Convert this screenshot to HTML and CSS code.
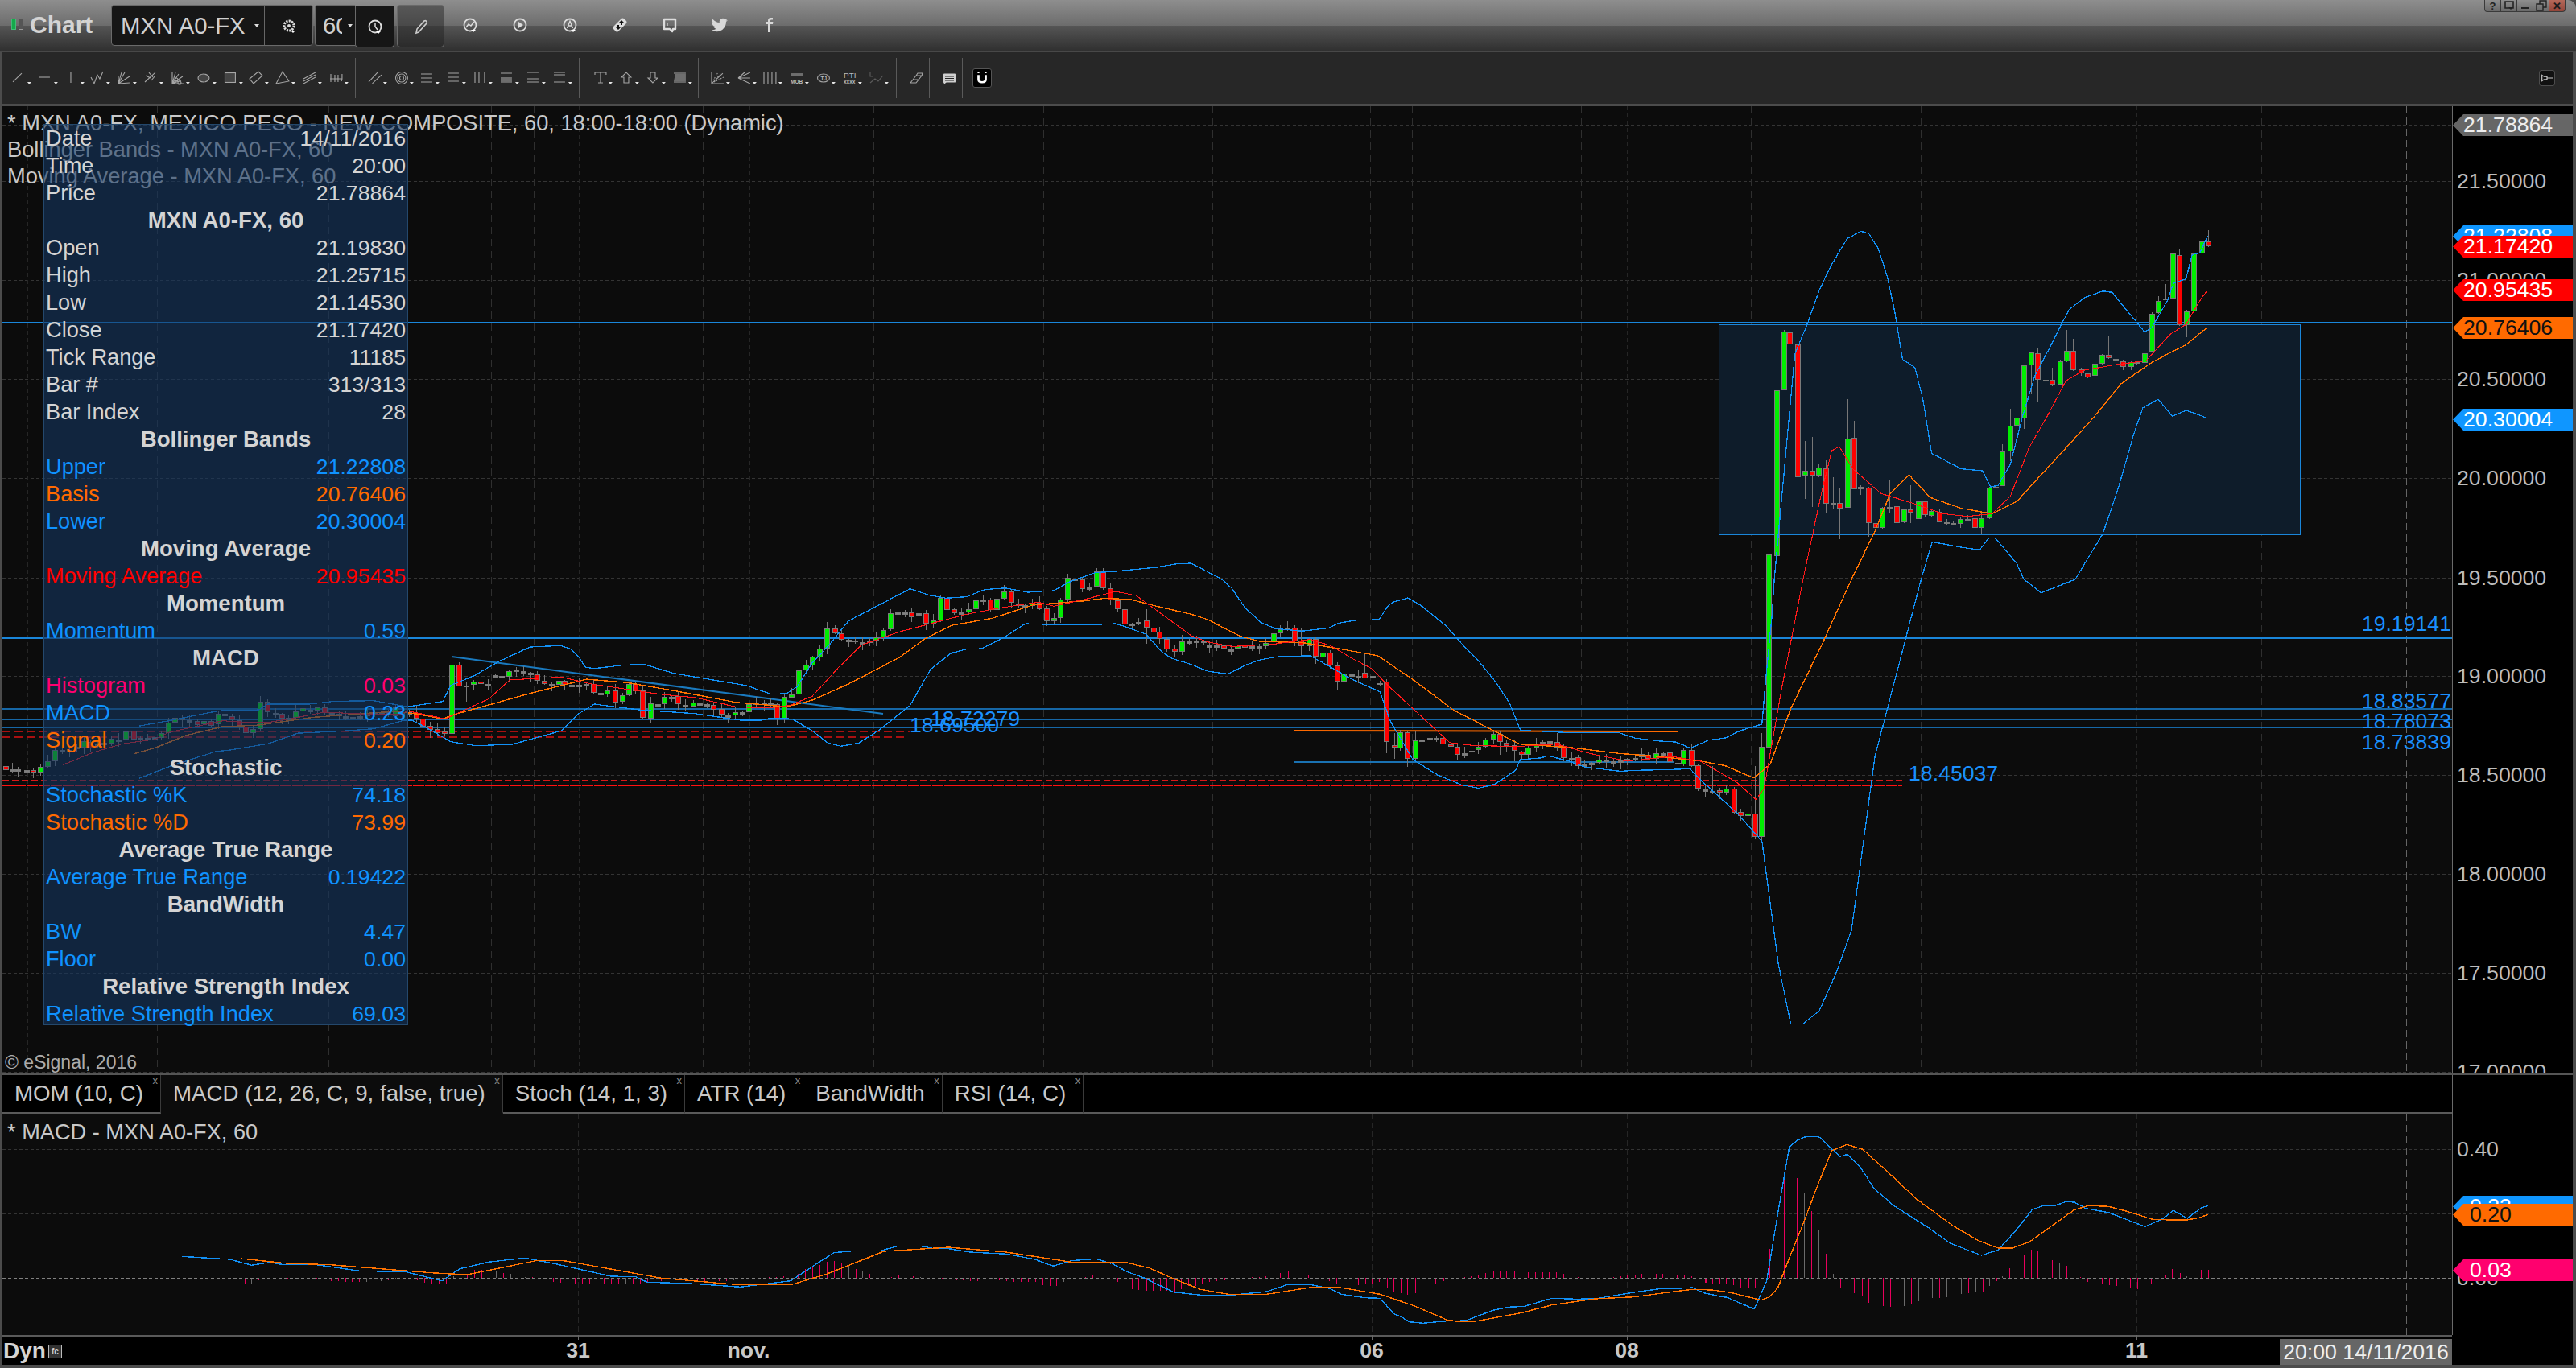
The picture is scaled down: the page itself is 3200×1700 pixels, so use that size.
FILE: index.html
```html
<!DOCTYPE html>
<html lang="en">
<head>
<meta charset="utf-8">
<title>Chart</title>
<link rel="stylesheet" href="styles.css">
</head>
<body>
<div class="window">
  <header class="titlebar">
    <span class="logo"><i class="logo-on"></i><i class="logo-off"></i></span>
    <span class="app-name">Chart</span>
    <div class="box symbol-box">
      <span class="symbol">MXN A0-FX</span>
      <i class="mini-caret"></i>
      <span class="gear-cell">
        <svg class="ticon" viewBox="0 0 20 20"><circle cx="10" cy="10" r="6" fill="none" stroke="#ddd" stroke-width="3" stroke-dasharray="2.2 1.2"/><circle cx="10" cy="10" r="2" fill="#ddd"/><path d="M12 16h6l-3 3z" fill="#fff"/></svg>
      </span>
    </div>
    <div class="box interval-box">
      <span class="interval">60</span>
      <i class="mini-caret"></i>
    </div>
    <div class="box clock-box">
      <svg class="ticon" viewBox="0 0 20 20"><circle cx="10" cy="10" r="7.5" fill="none" stroke="#ddd" stroke-width="1.8"/><path d="M10 5v5l3 4" fill="none" stroke="#ddd" stroke-width="1.5"/><path d="M11 16h6l-3 3z" fill="#fff"/></svg>
    </div>
    <div class="box pencil-box">
      <svg class="ticon" viewBox="0 0 20 20"><path d="M4 18l1-5L14 3q2-1 3 1t-1 3L7 17z" fill="none" stroke="#ccc" stroke-width="1.6"/></svg>
    </div>
    <div class="title-icons">
      <svg class="ticon" viewBox="0 0 20 20"><circle cx="10" cy="10" r="7.5" fill="none" stroke="#ddd" stroke-width="1.8"/><path d="M5 13l3-4 3 2 4-5" fill="none" stroke="#ddd" stroke-width="1.5"/><path d="M11 16h6l-3 3z" fill="#fff"/></svg>
      <svg class="ticon" viewBox="0 0 20 20"><circle cx="10" cy="10" r="7.5" fill="none" stroke="#ddd" stroke-width="1.8"/><path d="M8 6l6 4-6 4z" fill="#ddd"/></svg>
      <svg class="ticon" viewBox="0 0 20 20"><circle cx="10" cy="10" r="7.5" fill="none" stroke="#ddd" stroke-width="1.8"/><path d="M6.5 14L10 5l3.5 9M8 11h4" fill="none" stroke="#ddd" stroke-width="1.3"/><path d="M11 16h6l-3 3z" fill="#fff"/></svg>
      <svg class="ticon" viewBox="0 0 20 20"><path d="M2 12L12 2q1.500-1 3 0l3 3q1 1.500 0 3L8 18q-1.500 1-3 0l-3-3q-1-1.500 0-3z" fill="#ddd"/><path d="M12 4l3 3h-2v3h-2V7H9zM8 16l-3-3h2v-3h2v3h2z" fill="#111"/></svg>
      <svg class="ticon" viewBox="0 0 20 20"><path d="M3 3h14v12h-3l-1 3-3-3H3z" fill="none" stroke="#ddd" stroke-width="2.4" stroke-linejoin="round"/><path d="M7 7v4" stroke="#ddd" stroke-width="1.2"/></svg>
      <svg class="ticon" viewBox="0 0 24 24"><path d="M23.950 4.570a10 10 0 0 1-2.820.770 4.960 4.960 0 0 0 2.160-2.720 9.900 9.900 0 0 1-3.120 1.190 4.920 4.920 0 0 0-8.380 4.480A13.980 13.980 0 0 1 1.670 3.150a4.920 4.920 0 0 0 1.520 6.570 4.900 4.900 0 0 1-2.230-.610v.060a4.920 4.920 0 0 0 3.950 4.830 4.900 4.900 0 0 1-2.220.080 4.930 4.930 0 0 0 4.600 3.420A9.870 9.870 0 0 1 0 19.540a13.940 13.940 0 0 0 7.550 2.210c9.050 0 14-7.500 14-14 0-.210 0-.420-.010-.630a10 10 0 0 0 2.410-2.550z" fill="#d8d8d8"/></svg>
      <svg class="ticon" viewBox="0 0 20 20"><path d="M11 6V4.500q0-1 1.200-1H14V1h-2.500Q8 1 8 4.500V6H6v3h2v10h3V9h3l.4-3z" fill="#d8d8d8"/></svg>
    </div>
    <div class="win-btns">
      <span class="win-btn">?</span>
      <span class="win-btn"><svg class="wicon" viewBox="0 0 14 14"><path d="M2 2h10v8H2z" fill="none" stroke="#222" stroke-width="1.6"/><path d="M6 9h6l-3 3z" fill="#222"/></svg></span>
      <span class="win-btn"><svg class="wicon" viewBox="0 0 14 14"><path d="M2 10h10" stroke="#222" stroke-width="2"/></svg></span>
      <span class="win-btn"><svg class="wicon" viewBox="0 0 14 14"><path d="M1 5h8v8H1zM5 5V1h8v8H9" fill="none" stroke="#222" stroke-width="1.4"/></svg></span>
      <span class="win-btn win-close">✕</span>
    </div>
  </header>

  <nav class="toolbar">
    <svg class="tool" viewBox="0 0 33 32"><path d="M0 21L11 10"/><path class="caret" d="M18 21h5l-2.500 3z"/></svg>
    <svg class="tool" viewBox="0 0 33 32"><path d="M0 15h13"/><path class="caret" d="M18 21h5l-2.500 3z"/></svg>
    <svg class="tool" viewBox="0 0 33 32"><path d="M6 9v13"/><path class="caret" d="M18 21h5l-2.500 3z"/></svg>
    <svg class="tool" viewBox="0 0 33 32"><path d="M-1 15l4 8 4-11 3 5 4-9"/><path class="caret" d="M18 21h5l-2.500 3z"/></svg>
    <svg class="tool" viewBox="0 0 33 32"><path d="M0 14v9L4 9M0 23L14 14M0 23l14-1M0 23L8 9"/><path class="caret" d="M18 21h5l-2.500 3z"/></svg>
    <svg class="tool" viewBox="0 0 33 32"><path d="M0 21L13 9M1 13l6 3M5 9l5 6M8 19l5-6"/><path class="caret" d="M18 21h5l-2.500 3z"/></svg>
    <svg class="tool" viewBox="0 0 33 32"><path d="M1 9v14h14M1 23L14 14M1 23L12 19M1 23L5 9M1 23L9 11"/><circle cx="6" cy="18" r="2"/><circle cx="10" cy="22" r="2"/><path class="caret" d="M18 21h5l-2.500 3z"/></svg>
    <svg class="tool" viewBox="0 0 33 32"><ellipse class="shade" cx="7" cy="16" rx="7" ry="5"/><path class="caret" d="M18 21h5l-2.500 3z"/></svg>
    <svg class="tool" viewBox="0 0 33 32"><rect class="shade" x=".5" y="9.500" width="13" height="12"/><path class="caret" d="M18 21h5l-2.500 3z"/></svg>
    <svg class="tool" viewBox="0 0 33 32"><path d="M-1 17L10 8l5 5L4 23z"/><path class="caret" d="M18 21h5l-2.500 3z"/></svg>
    <svg class="tool" viewBox="0 0 33 32"><path d="M-1 23L7 8l8 12z"/><path class="caret" d="M18 21h5l-2.500 3z"/></svg>
    <svg class="tool" viewBox="0 0 33 32"><path d="M0 17L15 9M0 20l15-8M0 23l15-8"/><path class="caret" d="M18 21h5l-2.500 3z"/></svg>
    <svg class="tool" viewBox="0 0 33 32"><path d="M0 17h15M1 11v10M6 12v9M10 12v9M15 11v6q0 3-2 3"/><path class="caret" d="M18 21h5l-2.500 3z"/></svg>
    <i class="sep sep-a"></i>
    <svg class="tool" viewBox="0 0 33 32"><path d="M0 21L11 9M4.500 23L16 12"/><path class="caret" d="M18 21h5l-2.500 3z"/></svg>
    <svg class="tool" viewBox="0 0 33 32"><circle cx="8" cy="16" r="7.500"/><circle cx="8" cy="16" r="5"/><circle cx="8" cy="16" r="2.500"/><path class="caret" d="M18 21h5l-2.500 3z"/></svg>
    <svg class="tool" viewBox="0 0 33 32"><path d="M0 11h14M0 16h14M0 21h14"/><path class="caret" d="M18 21h5l-2.500 3z"/></svg>
    <svg class="tool" viewBox="0 0 33 32"><path d="M0 10h14M0 15h14M0 20h14"/><path class="caret" d="M18 21h5l-2.500 3z"/></svg>
    <svg class="tool" viewBox="0 0 33 32"><path d="M1 9v13M6 9v13M13 9v13"/><path class="caret" d="M18 21h5l-2.500 3z"/></svg>
    <svg class="tool" viewBox="0 0 33 32"><path d="M0 10h14M0 21h14"/><rect class="fill-bar" x="0" y="15" width="14" height="6"/><path class="caret" d="M18 21h5l-2.500 3z"/></svg>
    <svg class="tool" viewBox="0 0 33 32"><path d="M0 9h14M0 17h14M0 21h14"/><path class="caret" d="M18 21h5l-2.500 3z"/></svg>
    <svg class="tool" viewBox="0 0 33 32"><path d="M0 9h14M0 12h14M0 21h14"/><path class="caret" d="M18 21h5l-2.500 3z"/></svg>
    <i class="sep sep-b"></i>
    <svg class="tool" viewBox="0 0 33 32"><path d="M1 12V9h14v3M8 9v13M5 22h6"/><path class="caret" d="M18 21h5l-2.500 3z"/></svg>
    <svg class="tool" viewBox="0 0 33 32"><path d="M7 9l6 6h-3v7H4v-7H1z"/><path class="caret" d="M18 21h5l-2.500 3z"/></svg>
    <svg class="tool" viewBox="0 0 33 32"><path d="M7 22l6-6h-3V9H4v7H1z"/><path class="caret" d="M18 21h5l-2.500 3z"/></svg>
    <svg class="tool" viewBox="0 0 33 32"><path d="M0 10h15M0 21h15"/><path class="fill-bar" d="M2 11h13v9H0z"/><path class="caret" d="M18 21h5l-2.500 3z"/></svg>
    <i class="sep sep-c"></i>
    <svg class="tool" viewBox="0 0 33 32"><path d="M0 8v15h15M0 23L14 10"/><path class="dots" d="M2 19L8 9M3 21L15 15M3 19l9-8"/><path class="caret" d="M18 21h5l-2.500 3z"/></svg>
    <svg class="tool" viewBox="0 0 33 32"><path d="M0 16L15 9M0 16h15M0 16L15 23M0 16L8 9"/><path class="caret" d="M18 21h5l-2.500 3z"/></svg>
    <svg class="tool" viewBox="0 0 33 32"><path d="M0 8.500h15v15H0zM0 13.500h15M0 18.500h15M5 8.500v15M10 8.500v15"/><path class="caret" d="M18 21h5l-2.500 3z"/></svg>
    <svg class="tool" viewBox="0 0 33 32"><rect class="fill-bar" x="0" y="10" width="16" height="4"/><text class="tool-txt" x="0" y="23">MOB</text><path class="caret" d="M18 21h5l-2.500 3z"/></svg>
    <svg class="tool" viewBox="0 0 33 32"><ellipse cx="8" cy="16" rx="7.500" ry="5"/><text class="tool-txt" x="4.500" y="19">TJ</text><path class="caret" d="M18 21h5l-2.500 3z"/></svg>
    <svg class="tool" viewBox="0 0 33 32"><text class="tool-txt big" x="0" y="16">PTI</text><text class="tool-txt" x="0" y="23">xxxx</text><path class="caret" d="M18 21h5l-2.500 3z"/></svg>
    <svg class="tool dim" viewBox="0 0 33 32"><path d="M0 9v5h4M0 22l6-5 4 3 6-7"/><path class="caret" d="M18 21h5l-2.500 3z"/></svg>
    <i class="sep sep-d"></i>
    <svg class="tool tool-sm" viewBox="0 0 23 32"><path d="M0 22L7 13h7l-7 9zM7 13l2-3h6l-1 3-7 9M4 18h7"/></svg>
    <i class="sep sep-e"></i>
    <svg class="tool tool-sm chat" viewBox="0 0 24 32"><rect x="1" y="11" width="15" height="10" rx="1"/><path class="ink" d="M3 14h11M3 16.500h11M3 19h11"/><path d="M1 21h3l-2 2"/></svg>
    <i class="sep sep-f"></i>
    <span class="btn-u"><svg class="u-icon" viewBox="0 0 24 24"><path d="M6 7v7q0 5 6 5t6-5V7" fill="none" stroke="#fff" stroke-width="3.600"/><path d="M4.500 2h3v2h-3zM16.500 2h3v2h-3z" fill="#fff"/></svg></span>
    <span class="btn-pin"><svg class="u-icon" viewBox="0 0 20 20"><path d="M3 6l3 2h4v4H6l-3 2zM10 10h8" fill="none" stroke="#ccc" stroke-width="1.300"/></svg></span>
  </nav>

  <section class="main-pane">
    <div class="plot">
      <svg id="price-chart" class="chart-svg" viewBox="3 132 3043 1202"></svg>
      <div class="legend">
        <div class="legend-row">* MXN A0-FX, MEXICO PESO - NEW COMPOSITE, 60, 18:00-18:00 (Dynamic)</div>
        <div class="legend-row">Bollinger Bands - MXN A0-FX, 60</div>
        <div class="legend-row">Moving Average - MXN A0-FX, 60</div>
      </div>
      <div class="copyright">© eSignal, 2016</div>
      <div class="data-panel">
        <div class="row"><span>Date</span><span>14/11/2016</span></div>
        <div class="row"><span>Time</span><span>20:00</span></div>
        <div class="row"><span>Price</span><span>21.78864</span></div>
        <div class="row head">MXN A0-FX, 60</div>
        <div class="row"><span>Open</span><span>21.19830</span></div>
        <div class="row"><span>High</span><span>21.25715</span></div>
        <div class="row"><span>Low</span><span>21.14530</span></div>
        <div class="row"><span>Close</span><span>21.17420</span></div>
        <div class="row"><span>Tick Range</span><span>11185</span></div>
        <div class="row"><span>Bar #</span><span>313/313</span></div>
        <div class="row"><span>Bar Index</span><span>28</span></div>
        <div class="row head">Bollinger Bands</div>
        <div class="row c-blue"><span>Upper</span><span>21.22808</span></div>
        <div class="row c-orange"><span>Basis</span><span>20.76406</span></div>
        <div class="row c-blue"><span>Lower</span><span>20.30004</span></div>
        <div class="row head">Moving Average</div>
        <div class="row c-red"><span>Moving Average</span><span>20.95435</span></div>
        <div class="row head">Momentum</div>
        <div class="row c-blue"><span>Momentum</span><span>0.59</span></div>
        <div class="row head">MACD</div>
        <div class="row c-pink"><span>Histogram</span><span>0.03</span></div>
        <div class="row c-blue"><span>MACD</span><span>0.23</span></div>
        <div class="row c-orange"><span>Signal</span><span>0.20</span></div>
        <div class="row head">Stochastic</div>
        <div class="row c-blue"><span>Stochastic %K</span><span>74.18</span></div>
        <div class="row c-orange"><span>Stochastic %D</span><span>73.99</span></div>
        <div class="row head">Average True Range</div>
        <div class="row c-blue"><span>Average True Range</span><span>0.19422</span></div>
        <div class="row head">BandWidth</div>
        <div class="row c-blue"><span>BW</span><span>4.47</span></div>
        <div class="row c-blue"><span>Floor</span><span>0.00</span></div>
        <div class="row head">Relative Strength Index</div>
        <div class="row c-blue"><span>Relative Strength Index</span><span>69.03</span></div>
      </div>
    </div>
    <aside class="axis">
      <span class="plabel" style="top:93px">21.50000</span>
      <span class="plabel" style="top:216px">21.00000</span>
      <span class="plabel" style="top:339px">20.50000</span>
      <span class="plabel" style="top:462px">20.00000</span>
      <span class="plabel" style="top:586px">19.50000</span>
      <span class="plabel" style="top:708px">19.00000</span>
      <span class="plabel" style="top:831px">18.50000</span>
      <span class="plabel" style="top:954px">18.00000</span>
      <span class="plabel" style="top:1077px">17.50000</span>
      <span class="plabel" style="top:1200px">17.00000</span>
      <span class="tag t-gray" style="top:10px">21.78864</span>
      <span class="tag t-blue" style="top:148px">21.22808</span>
      <span class="tag t-red" style="top:161px">21.17420</span>
      <span class="tag t-red" style="top:215px">20.95435</span>
      <span class="tag t-orange" style="top:262px">20.76406</span>
      <span class="tag t-blue" style="top:376px">20.30004</span>
    </aside>
  </section>

  <section class="sub-pane">
    <div class="sub-main">
      <div class="tabs">
        <div class="tab">MOM (10, C)<i class="tab-x">x</i></div>
        <div class="tab active">MACD (12, 26, C, 9, false, true)<i class="tab-x">x</i></div>
        <div class="tab">Stoch (14, 1, 3)<i class="tab-x">x</i></div>
        <div class="tab">ATR (14)<i class="tab-x">x</i></div>
        <div class="tab">BandWidth<i class="tab-x">x</i></div>
        <div class="tab">RSI (14, C)<i class="tab-x">x</i></div>
      </div>
      <div class="sub-plot">
        <svg id="macd-chart" class="chart-svg" viewBox="3 1384 3043 275"></svg>
        <div class="sub-title">* MACD - MXN A0-FX, 60</div>
      </div>
    </div>
    <aside class="axis sub-axis">
      <span class="plabel" style="top:92px">0.40</span>
      <span class="plabel" style="top:252px">0.00</span>
      <span class="tag t-blue sub" style="top:150px">0.23</span>
      <span class="tag t-orange sub" style="top:160px">0.20</span>
      <span class="tag t-pink sub" style="top:229px">0.03</span>
    </aside>
  </section>

  <footer class="time-axis">
    <span class="dyn">Dyn<i class="dyn-icon">fc</i></span>
    <i class="tick tick-31"></i><span class="tlabel tl-31">31</span>
    <i class="tick tick-nov"></i><span class="tlabel tl-nov">nov.</span>
    <i class="tick tick-06"></i><span class="tlabel tl-06">06</span>
    <i class="tick tick-08"></i><span class="tlabel tl-08">08</span>
    <i class="tick tick-11"></i><span class="tlabel tl-11">11</span>
    <span class="cursor-date">20:00 14/11/2016</span>
  </footer>
</div>
<script src="app.js"></script>
</body>
</html>
```
FILE: styles.css
```css
* { box-sizing: border-box; }
html, body { margin: 0; padding: 0; }
body {
  width: 3200px; height: 1700px; overflow: hidden;
  background: #4c4c4c;
  font-family: "Liberation Sans", Arial, sans-serif;
  font-size: 26.67px; color: #c8c8c8;
}
.window { display: flex; flex-direction: column; height: 1700px; }
i { font-style: normal; display: block; }

/* title bar */
.titlebar {
  position: relative; display: flex; align-items: flex-start;
  height: 65px; flex: none;
  border-radius: 0 10px 0 0;
  border-bottom: 2px solid #484848;
  background: linear-gradient(#8e8e8e 0, #6c6c6c 32px, #555 32px, #303030 63px);
}
.logo { display: flex; gap: 3px; margin: 23px 0 0 14px; width: 16px; height: 14px; }
.logo-on { width: 6px; height: 14px; background: #15a94b; border: 1px solid #4b7; }
.logo-off { width: 6px; height: 14px; background: #555; border: 1px solid #999; }
.app-name { margin: 11px 0 0 7px; width: 101px; font: bold 30px/40px "Liberation Sans", sans-serif; color: #d4d4d4; }
.box {
  display: flex; align-items: center; margin-top: 6px; height: 51px;
  background: #161616; border: 1px solid #6a6a6a; border-radius: 4px; color: #d0d0d0;
}
.symbol-box { width: 251px; }
.symbol { margin-left: 11px; width: 166px; font-size: 29.3px; white-space: nowrap; }
.mini-caret { width: 0; height: 0; border: 3px solid transparent; border-top: 4px solid #ddd; border-bottom: 0; }
.gear-cell { display: flex; align-items: center; justify-content: center; margin-left: 6px; flex: 1; height: 100%; border-left: 1px solid #666; }
.interval-box { margin-left: 2px; width: 50px; border-right: 0; border-radius: 4px 0 0 4px; }
.interval { margin-left: 9px; width: 24px; overflow: hidden; font-size: 29.3px; white-space: nowrap; }
.interval-box .mini-caret { margin-left: 7px; }
.clock-box { width: 49px; height: 52px; margin-top: 7px; justify-content: center; border-radius: 0 0 4px 4px; border-top: 0; }
.pencil-box { width: 59px; height: 53px; margin-left: 3px; justify-content: center; background: rgba(30,30,30,.45); }
.ticon { width: 20px; height: 20px; }
.title-icons { display: flex; gap: 42px; margin: 21px 0 0 22px; }
.win-btns { position: absolute; top: 0; right: 13px; display: flex; height: 15px; }
.win-btn {
  display: flex; align-items: center; justify-content: center;
  width: 21px; height: 15px;
  background: linear-gradient(#8e8e8e, #6a6a6a);
  border: 1px solid #3a3a3a; border-top: 0; margin-left: -1px;
  font: bold 13px/1 "Liberation Sans", sans-serif; color: #222;
}
.win-btn:first-child { border-radius: 0 0 0 4px; }
.win-close { background: linear-gradient(#b5695a, #94463a); border-radius: 0 0 4px 0; color: #1c1c1c; }
.wicon { width: 14px; height: 14px; }

/* drawing tools */
.toolbar {
  display: flex; align-items: center; flex: none;
  height: 64px; margin: 0 4px 0 3px; padding-left: 13px;
  background: #272727;
}
.tool { flex: none; width: 32.83px; height: 32px; overflow: visible; fill: none; stroke: #a6a6a6; stroke-width: 1.1; }
.tool .caret { fill: #e4e4e4; stroke: none; }
.tool .shade { fill: #444; }
.tool .fill-bar { fill: #6e6e6e; stroke: none; }
.tool .dots { stroke-dasharray: 1.500 1.500; }
.tool .ink { stroke: #222; stroke-width: 1; }
.tool-txt { fill: #bbb; stroke: none; font: bold 6.500px "Liberation Sans", sans-serif; }
.tool-txt.big { font-weight: normal; font-size: 10px; }
.tool.dim { stroke: #5c5c5c; }
.tool-sm { width: 23px; }
.tool.chat { width: 24px; fill: #cfcfcf; stroke: #cfcfcf; }
.sep { flex: none; width: 1px; height: 50px; background: #5a5a5a; }
.sep-a { margin: 0 16px 0 -2px; }
.sep-b { margin: 0 18px 0 -1px; }
.sep-c { margin: 0 16px 0 -3px; }
.sep-d { margin: 0 17px 0 -1px; }
.sep-e { margin: 0 16px 0 0; }
.sep-f { margin: 0 12px 0 0; }
.btn-u { display: flex; align-items: center; justify-content: center; width: 24px; height: 24px; background: #000; border: 1px solid #555; border-radius: 3px; }
.btn-pin { display: flex; align-items: center; justify-content: center; margin: 0 22px 0 auto; width: 20px; height: 20px; background: #111; border: 1px solid #4c4c4c; border-radius: 3px; }
.u-icon { width: 18px; height: 18px; }

/* price pane */
.main-pane {
  display: flex; flex: none; height: 1204px;
  margin: 3px 4px 0 3px;
  border-bottom: 2px solid #555;
  overflow: hidden;
}
.plot { position: relative; width: 3043px; flex: none; background: #0c0c0c; }
.chart-svg { position: absolute; inset: 0; width: 3043px; height: 100%; display: block; }
.legend { position: absolute; left: 6px; top: 4px; font-size: 27.25px; line-height: 33px; white-space: nowrap; }
.legend-row { height: 33px; }
.copyright { position: absolute; left: 3px; top: 1173px; font-size: 23px; line-height: 30px; color: #aaa; }
.data-panel {
  position: absolute; left: 51px; top: 22px; width: 453px; height: 1120px;
  padding: 0 2px;
  background: rgba(22,55,97,.6);
  border: 1px solid #24486c;
  color: #d4d4d4;
}
.row { display: flex; justify-content: space-between; height: 34px; line-height: 34px; white-space: nowrap; }
.row span:first-child { font-size: 27.2px; }
.row.head { justify-content: center; font-size: 27.6px; font-weight: bold; }
.c-blue { color: #0f92ff; }
.c-orange { color: #ff6a00; }
.c-red { color: #f00; }
.c-pink { color: #ff0070; }

/* axes */
.axis { position: relative; width: 150px; flex: none; background: #000; border-left: 1px solid #6a6a6a; }
.plabel { position: absolute; left: 5px; height: 26px; line-height: 26px; transform: translateY(-50%); color: #bcbcbc; }
.tag {
  position: absolute; left: 0; width: 149px; height: 27px; padding-left: 13px;
  line-height: 27px; color: #fff;
  clip-path: polygon(13px 0, 100% 0, 100% 100%, 13px 100%, 0 50%);
}
.tag.sub { padding-left: 21px; }
.t-gray { background: #666; color: #eee; }
.t-blue { background: #0f96ff; }
.t-red { background: #f00; }
.t-orange { background: #ff6a00; color: #111; }
.t-pink { background: #ff006e; }

/* lower pane */
.sub-pane { display: flex; flex: none; height: 323px; margin: 0 4px 0 3px; }
.sub-main { width: 3043px; flex: none; display: flex; flex-direction: column; background: #000; }
.tabs { display: flex; flex: none; height: 48px; border-bottom: 2px solid #5a5a5a; background: #000; }
.tab {
  position: relative; height: 48px; padding: 0 21px 0 15px; margin-bottom: -2px;
  border-right: 1px solid #3a3a3a; border-bottom: 2px solid #5a5a5a;
  font-size: 27.7px; line-height: 46px; white-space: nowrap; background: #000; color: #c8c8c8;
}
.tab.active { background: #0c0c0c; border-bottom-color: #0c0c0c; }
.tab-x { position: absolute; right: 3px; top: 0; font-size: 13px; line-height: 14px; color: #888; }
.sub-plot { position: relative; flex: 1; background: #0c0c0c; }
.sub-plot .chart-svg { width: 3043px; }
.sub-title { position: absolute; left: 6px; top: 8px; font-size: 27.2px; line-height: 30px; }

/* time axis */
.time-axis {
  position: relative; flex: none; height: 37px;
  margin: 0 4px 0 3px; background: #000;
}
.time-axis::before { content: ""; position: absolute; left: 0; top: 0; width: 3043px; height: 2px; background: #5a5a5a; }
.dyn { position: absolute; left: 1px; top: 3px; display: flex; align-items: center; font: bold 28px/34px "Liberation Sans", sans-serif; color: #d4d4d4; }
.dyn-icon { width: 17px; height: 17px; margin-left: 3px; border: 1px solid #bbb; background: #333; font: bold 10px/15px "Liberation Sans", sans-serif; text-align: center; color: #ccc; }
.tlabel { position: absolute; top: 2px; line-height: 34px; font-weight: bold; transform: translateX(-50%); color: #c8c8c8; }
.tick { position: absolute; top: 0; width: 1px; height: 6px; background: #666; }
.tl-31 { left: 715px; } .tick-31 { left: 715px; }
.tl-nov { left: 927px; } .tick-nov { left: 927px; }
.tl-06 { left: 1701px; } .tick-06 { left: 1701px; }
.tl-08 { left: 2018px; } .tick-08 { left: 2018px; }
.tl-11 { left: 2651px; } .tick-11 { left: 2651px; }
.cursor-date { position: absolute; left: 2829px; top: 5px; width: 214px; height: 32px; background: #666; color: #eee; line-height: 32px; text-align: center; white-space: nowrap; }

/* chart svg pieces */
.lbl { font: 26.670px "Liberation Sans", sans-serif; fill: #1a90ff; }
```
FILE: app.js
```js
(function () {
  var z3 = function (X, Y) { return [X / 2.24, 760 + Y / 2.8]; };
  var z7 = function (X, Y) { return [480 + X / 1.568, 680 + Y / 3]; };
  var z8 = function (X, Y) { return [1500 + X / 1.96, 720 + Y / 2.613]; };
  var z4 = function (X, Y) { return [2000 + X / 1.3067, 240 + Y / 3]; };
  var z5 = function (X, Y) { return [X / 1.12, 1300 + Y / 3]; };
  var z6 = function (X, Y) { return [2100 + X / 1.4255, 1340 + Y / 3]; };
  var z10 = function (X, Y) { return [1380 + X / 2.063, 1440 + Y / 3]; };

  var out = [];
  function line(x1, y1, x2, y2, stroke, w, dash, crisp) {
    out.push('<line x1="' + x1 + '" y1="' + y1 + '" x2="' + x2 + '" y2="' + y2 + '" stroke="' + stroke + '" stroke-width="' + w + '"' +
      (dash ? ' stroke-dasharray="' + dash + '"' : '') + (crisp ? ' shape-rendering="crispEdges"' : '') + '/>');
  }
  function poly(pts, stroke, w) {
    var s = pts.map(function (p) { return p[0].toFixed(1) + ',' + p[1].toFixed(1); }).join(' ');
    out.push('<polyline points="' + s + '" fill="none" stroke="' + stroke + '" stroke-width="' + w + '" stroke-linejoin="round" shape-rendering="crispEdges"/>');
  }
  function map(tf, arr, xmin, xmax) {
    var r = arr.map(function (a) { return tf(a[0], a[1]); });
    return r.filter(function (p) { return (xmin === undefined || p[0] >= xmin) && (xmax === undefined || p[0] <= xmax); });
  }

  /* ---------- price pane ---------- */
  var grid = '#343434';
  [155, 225, 348, 471, 594, 718, 840, 963, 1086, 1209, 1332].forEach(function (y) { line(3, y, 3046, y, grid, 1, '4 3', true); });
  [195, 408, 610, 663, 873, 1085, 1296, 1506, 1702, 1754, 1964, 2175, 2386, 2597, 2809].forEach(function (x) { line(x, 132, x, 1334, '#2f2f2f', 1, '9 6', true); });
  [34, 719, 931, 2021, 2654].forEach(function (x) { line(x, 132, x, 1334, '#262626', 1, '5 4', true); });
  line(2989, 132, 2989, 1334, '#666', 1, '9 5', true);

  out.push('<rect x="2135.500" y="403.500" width="721.500" height="261" fill="#0e1c2a" stroke="#1a86da" stroke-width="1" shape-rendering="crispEdges"/>');
  [[793, 2], [881, 1.5], [894, 1.5], [904, 1.5], [401, 2]].forEach(function (l) { line(3, l[0], 3046, l[0], '#1a86da', l[1]); });

  line(3, 909, 1130, 909, '#a81010', 2, '10 5', true);
  line(3, 916, 1124, 916, '#a81010', 2, '10 5', true);
  line(3, 969.500, 2363, 969.500, '#d81818', 1, '8 4', true);
  line(3, 976, 2363, 976, '#ff1010', 2.500, '14 1', true);

  line(561, 816, 1097, 887, '#1a7abf', 2);
  line(1608, 908, 2084, 909, '#ff6a00', 2);
  line(1608, 947, 2080, 947, '#1a72b2', 2);

  var upper = map(z3, [[388,398],[470,380],[610,345],[720,342],[745,322],[860,322],[930,312],[1040,310],[1120,328]], 0, 503)
    .concat(map(z7, [[40,595],[110,575],[125,515],[170,480],[220,425],[280,372],[340,367],[360,380],[375,410],[388,448],[405,452],[460,440],[500,436],[560,470],[620,490],[700,515],[750,548],[780,545],[800,520],[830,430],[860,370],[900,275],[960,215],[1020,155],[1060,180],[1090,190],[1130,185],[1165,158],[1205,152],[1250,168],[1300,162],[1330,130],[1380,95],[1420,90],[1500,75],[1540,62],[1568,60]]))
    .concat(map(z8, [[35,0],[60,30],[90,90],[130,140],[165,160],[230,168],[295,158],[320,142],[360,133],[418,130],[440,85],[455,72],[488,60],[520,85],[580,150],[620,210],[660,265],[700,330],[735,400],[750,450],[762,490],[880,498],[1000,497],[1040,515],[1100,525],[1140,528],[1176,548],[1220,522],[1260,515],[1300,490],[1350,470],[1358,340],[1375,110],[1380,0]]))
    .concat(map(z4, [[300,600],[320,490],[340,360],[360,265],[385,170],[407,142],[420,150],[435,205],[450,310],[462,440],[475,620],[495,650],[508,770],[522,970],[570,1028],[605,1035],[618,1095],[630,1090],[650,1010],[670,830],[690,680],[715,570],[745,435],[770,390],[800,365],[815,370],[840,440],[868,518],[880,500],[905,400],[915,335],[935,320],[945,230],[958,222],[970,160]]));
  var lower = map(z3, [[388,580],[480,535],[600,487],[640,482],[745,460],[830,423],[920,418],[1040,408],[1125,378]], 0, 503)
    .concat(map(z7, [[50,645],[85,680],[125,725],[175,740],[245,735],[340,685],[375,620],[405,585],[500,608],[520,610],[600,620],[690,645],[730,645],[750,637],[790,640],[830,685],[860,730],[885,742],[920,730],[960,682],[1020,590],[1060,455],[1100,395],[1130,380],[1160,378],[1200,340],[1245,285],[1310,290],[1390,288],[1420,285],[1440,297],[1480,325],[1510,390],[1530,415],[1568,437]]))
    .concat(map(z8, [[0,298],[50,307],[90,280],[125,262],[175,250],[250,248],[320,300],[345,320],[420,365],[445,460],[500,585],[560,635],[620,668],[660,678],[700,665],[750,620],[762,585],[810,580],[830,573],[880,590],[920,610],[1005,623],[1040,620],[1120,618],[1175,615],[1200,650],[1290,760],[1350,850],[1365,1000],[1390,1250],[1420,1443],[1450,1443],[1490,1400],[1530,1280],[1568,1140]]))
    .concat(map(z4, [[430,2100],[505,1440],[523,1300],[570,1320],[600,1330],[615,1285],[625,1285],[660,1380],[672,1440],[700,1490],[755,1440],[800,1270],[825,1100],[850,900],[865,800],[890,768],[913,832],[935,810],[960,830],[970,842]]));
  var ma = map(z3, [[175,533],[260,490],[340,460],[430,445],[470,420],[620,380],[680,385],[750,385],[830,368],[900,350],[1050,358],[1120,356]], 0, 503)
    .concat(map(z7, [[40,610],[115,640],[200,565],[240,495],[340,484],[400,510],[470,530],[540,550],[600,560],[680,595],[740,600],[785,590],[830,555],[880,450],[925,365],[1000,315],[1060,285],[1130,250],[1200,225],[1270,205],[1300,220],[1370,190],[1420,165],[1460,180],[1500,235],[1568,330]]))
    .concat(map(z8, [[0,203],[60,218],[150,212],[250,195],[300,215],[350,255],[400,290],[440,345],[500,420],[590,530],[650,540],[760,542],[850,535],[930,565],[1020,590],[1060,585],[1130,575],[1200,590],[1290,660],[1335,715],[1355,680],[1400,340],[1450,0]]))
    .concat(map(z4, [[345,1100],[360,960],[372,945],[395,1030],[440,1120],[490,1155],[540,1195],[580,1205],[620,1195],[650,1130],[680,950],[710,830],[740,700],[770,660],[820,640],[870,625],[910,525],[935,490],[955,410],[970,360]]));
  var ema = map(z3, [[372,495],[430,475],[520,430],[620,400],[720,395],[870,368],[1120,358]], 0, 490)
    .concat(map(z7, [[15,612],[60,622],[110,640],[130,625],[280,545],[390,492],[470,505],[560,535],[680,578],[780,595],[830,570],[900,510],[1000,410],[1050,340],[1100,292],[1180,265],[1260,215],[1360,200],[1400,190],[1450,195],[1500,220],[1568,250]]))
    .concat(map(z8, [[0,130],[80,185],[130,202],[230,205],[320,225],[415,248],[500,325],[600,425],[760,535],[880,545],[1000,565],[1100,575],[1200,590],[1260,605],[1330,645],[1370,600],[1420,420],[1500,200],[1568,0]]))
    .concat(map(z4, [[430,1260],[455,1120],[485,1050],[520,1135],[570,1175],[620,1195],[660,1150],[720,1000],[780,850],[830,710],[880,630],[935,565],[970,500]]));

  /* candles: [X, top, bottom, colour, high, low] in crop coordinates; a gray doji is [X, y] */
  var candleIndex = 0;
  function candles(tf, list) {
    list.forEach(function (c) {
      candleIndex++;
      var p = tf(c[0], c[1]);
      var top = p[1], bot = c.length > 2 ? tf(c[0], c[2])[1] : top + 2;
      var hi = c[4] !== undefined ? tf(c[0], c[4])[1] : top - (2 + (candleIndex * 7) % 5 * 1.5);
      var lo = c[5] !== undefined ? tf(c[0], c[5])[1] : bot + (2 + (candleIndex * 11) % 7);
      var x = Math.round(p[0]);
      line(x, hi.toFixed(1), x, lo.toFixed(1), '#777', 1, null, true);
      var fill = c[3] === 'g' ? '#00ee00' : c[3] === 'r' ? '#ff0000' : '#808080';
      out.push('<rect x="' + (x - 3) + '" y="' + top.toFixed(1) + '" width="6" height="' + Math.max(1, bot - top).toFixed(1) +
        '" fill="' + fill + '" stroke="#7a7a7a" stroke-width="1" shape-rendering="crispEdges"/>');
    });
  }

  candles(z3, [[15,540,550,'r'],[33,550],[50,550],[73,553],[92,552,558,'r'],[113,543,558,'g'],[133,522,538,'g'],[153,484,520,'g'],[173,482],[193,482],[213,472],[232,453,472,'g'],[250,455,475,'r'],[270,462],[290,458],[310,444,458,'g'],[330,446],[350,418,444,'g'],[371,416,444,'r'],[390,440],[410,440],[430,438],[449,425,437,'g'],[469,388,422,'g'],[487,372,384,'g'],[507,372],[527,380],[548,382,392,'r'],[567,382,390,'g'],[586,382,395,'r'],[606,358,390,'g'],[626,358],[646,366,376,'r'],[666,380,398,'r'],[684,402,422,'r'],[704,410,422,'g'],[724,315,408,'g'],[744,315,348,'r'],[765,353],[783,358,370,'r'],[803,372],[823,348,368,'g'],[843,338,346,'g'],[863,342],[882,335,342,'g'],[902,335,350,'r'],[922,354],[942,358],[962,366],[982,368],[1002,364],[1022,358],[1042,350],[1062,352],[1080,348],[1100,335,362,'g'],[1118,350],[1138,352]]);

  candles(z7, [[58,618,636,'r',590,650],[71,640,668,'r'],[85,668,678,'r',650,710],[99,678,690,'r'],[113,688,695,'r',670,705],[127,438,695,'g',408,700],[141,438,518,'r',430,520],[155,516,518,'',505,575],[169,502,512,'g',495,535],[183,503,508,'r'],[197,512],[211,477],[225,482],[239,463,482,'g',455,505],[253,456],[267,462],[281,470],[293,476,496,'r'],[307,500,508,'r'],[321,512],[335,500,510,'g'],[347,500,512,'r'],[361,513,520,'r'],[375,513,520,'g'],[389,512],[403,512,542,'r'],[417,545],[430,535,548,'g'],[445,535,578,'r'],[459,553,573,'g'],[472,510,550,'g',505,555],[485,510,535,'r'],[499,535,635,'r'],[514,583,637,'g'],[528,585],[541,560,583,'g'],[555,558],[568,556,583,'r'],[582,590],[597,580,592,'g'],[610,583],[624,585],[637,590,605,'r'],[652,605,623,'r'],[665,627],[679,617,624,'g'],[693,617],[706,585,613,'g'],[720,581],[735,581],[748,581],[761,585,640,'r'],[775,560,640,'g'],[789,550,558,'g'],[803,460,548,'g'],[817,438,458,'g'],[830,410,438,'g'],[844,380,410,'g'],[858,303,376,'g'],[873,304,318,'r',290,325],[886,322,342,'r'],[900,347],[913,348,352,'r'],[927,356],[941,350],[954,338,346,'g'],[968,310,335,'g'],[982,247,305,'g'],[996,245],[1010,245],[1023,245,258,'r'],[1037,248],[1051,248,284,'r'],[1065,274,284,'g'],[1079,190,272,'g'],[1092,190,233,'r'],[1106,233,243,'r'],[1120,243],[1134,232,240,'g'],[1148,198,230,'g'],[1162,195],[1176,195,233,'r'],[1189,193,232,'g'],[1203,165,190,'g',140,195],[1217,165,205,'r'],[1231,210],[1244,217],[1258,207,217,'g'],[1272,207,228,'r'],[1286,228,275,'r'],[1300,265,275,'g'],[1313,195,262,'g'],[1327,115,193,'g'],[1341,117],[1355,121,153,'r'],[1369,150],[1383,92,145,'g',78,150],[1396,92,150,'r'],[1410,155,195,'r'],[1424,200,230,'r'],[1438,232,287,'r'],[1452,287],[1465,280],[1480,275,298,'r',232,360],[1494,300,315,'r'],[1506,317,340,'r'],[1520,343,378,'r'],[1535,380,388,'r'],[1549,352,387,'g'],[1563,352],[1577,350],[1591,350]]);

  candles(z8, [[4,215],[22,216],[40,215,223,'r'],[56,228],[73,217,223,'g'],[90,216,220,'r'],[108,219],[125,219],[142,207,215,'g'],[160,177,203,'g'],[177,163,173,'g'],[194,157],[211,158,200,'r'],[228,201,216,'r',160,245],[246,195,215,'g'],[263,195,250,'r',185,275],[281,238,252,'g',220,285],[297,238,278,'r'],[315,280,330,'r',270,360],[332,308,330,'g'],[350,309],[367,314],[383,304,320,'r',240,322],[401,314],[419,339,341,'',330,345],[436,333,527,'r',325,565],[454,539,545,'r',500,583],[469,498,548,'g'],[487,498,581,'r',490,608],[505,524,581,'g',495,590],[522,522],[540,517],[557,517],[573,516,535,'r'],[591,537,542,'r'],[608,545,569,'r'],[626,565],[642,558,560,'',530,580],[659,545,553,'g'],[677,521,543,'g'],[695,503,519,'g'],[712,503,526,'r',490,570],[728,532,540,'r'],[746,540,555,'r',520,590],[764,561,568,'r'],[781,547,569,'g'],[799,535,544,'g',515,560],[815,530],[833,527],[850,530,544,'r',500,556],[866,547,580,'r'],[885,580],[901,578,604,'r'],[918,603],[935,597],[953,586,594,'g'],[970,587],[987,592],[1005,590],[1022,584,590,'g'],[1040,580],[1057,569,576,'g'],[1073,571,581,'r'],[1091,566,581,'g'],[1109,565],[1126,563,592,'r'],[1144,597,599,'',570,627],[1159,555,600,'g'],[1177,555,605,'r',533,610],[1194,605,678,'r'],[1212,682],[1229,688,690,'',605,698],[1246,686,692,'r'],[1263,680,692,'g',665,700],[1281,680,757,'r'],[1298,757,768,'r'],[1316,762,768,'g',745,795],[1332,762,835,'r',605,842],[1349,545,835,'g',500,858]]);

  candles(z4, [[258,1348,2064,'g',1158,2065],[270,735,1350,'g',700,1352],[282,517,732,'g',510,735],[292,520,562,'r',482,690],[304,565,1057,'r',560,1100],[316,1036,1052,'g',923,1140],[328,1036,1052,'r',910,1170],[339,1024,1052,'g',1010,1060],[350,1027,1157,'r',995,1190],[362,1157,1159,'',1060,1175],[373,1156,1173,'r',1100,1290],[385,915,1171,'g',768,1173],[396,913,1102,'r',850,1105],[407,1096,1102,'g',1090,1125],[419,1098,1228,'r',1095,1280],[431,1232,1246,'r',1228,1250],[442,1174,1246,'g',1170,1250],[454,1172,1174,'',1070,1190],[465,1168,1228,'r',1110,1232],[477,1180,1225,'g',1175,1230],[488,1180,1190,'r',1090,1230],[500,1150,1213,'g',1145,1215],[511,1150,1198,'r',1145,1205],[522,1186,1202,'g',1180,1210],[534,1188,1224,'r',1180,1228],[546,1227,1229,'',1215,1235],[557,1232,1234,'',1225,1240],[569,1216,1232,'g',1210,1248],[580,1217,1219,'',1200,1222],[592,1212,1246,'r',1200,1250],[603,1212,1246,'g',1195,1270],[615,1098,1210,'g',1095,1215],[626,1096,1098,'',1085,1100],[637,964,1090,'g',935,1093],[649,868,960,'g',805,1000],[660,838,866,'g',805,870],[672,642,838,'g',640,880],[683,595,640,'g',590,750],[694,598,693,'r',578,780],[707,698,700,'',650,720],[718,697,712,'r',650,720],[730,627,712,'g',622,715],[741,590,625,'g',510,630],[752,590,658,'r',543,662],[764,658,670,'r',650,680],[775,673,684,'r',668,690],[787,637,680,'g',630,695],[798,603,634,'g',600,640],[809,604,613,'r',530,618],[821,620,622,'',612,628],[833,628,646,'r',622,660],[845,632,646,'g',625,660],[855,631,633,'',625,640],[867,598,632,'g',535,638],[879,451,590,'g',445,595],[890,404,446,'g',385,450],[902,395,397,'',340,400],[913,226,391,'g',36,395],[924,232,490,'r',208,495],[936,442,490,'g',435,536],[948,226,440,'g',155,445],[960,181,222,'g',150,292],[971,181,196,'r',138,200]]);

  poly(upper, '#1290f5', 1.3);
  poly(lower, '#1290f5', 1.3);
  poly(ema, '#ff7200', 1.4);
  poly(ma, '#ff1a1a', 1.1);

  [['19.19141', 'end', 3045, 784],
   ['18.83577', 'end', 3045, 880],
   ['18.78073', 'end', 3045, 905],
   ['18.73839', 'end', 3045, 931],
   ['18.45037', 'start', 2371, 970],
   ['18.72279', 'start', 1156, 902],
   ['18.69500', 'start', 1130, 910]].forEach(function (l) {
    out.push('<text class="lbl" x="' + l[2] + '" y="' + l[3] + '" text-anchor="' + l[1] + '">' + l[0] + '</text>');
  });
  document.getElementById('price-chart').innerHTML = out.join('');

  /* ---------- MACD pane ---------- */
  out = [];
  [1428, 1508].forEach(function (y) { line(3, y, 3046, y, '#343434', 1, '4 3', true); });
  [33, 718, 930, 1704, 2021, 2654].forEach(function (x) { line(x, 1384, x, 1659, '#262626', 1, '7 4', true); });
  line(2989, 1384, 2989, 1659, '#666', 1, '9 5', true);

  function hist(tf, zero, arr, alt) {
    var prev = 0, k = 0;
    arr.forEach(function (a) {
      k++;
      var x = Math.round(tf(a[0], a[1])[0]);
      var y0 = tf(a[0], zero)[1], y1 = tf(a[0], a[1])[1];
      var h = Math.abs(y1 - y0);
      var gray = alt && h < prev && k % 2 === 0;
      prev = h;
      line(x, y0, x, y1.toFixed(1), gray ? '#6a6a6a' : '#e8005c', 1, null, true);
    });
  }
  var h5 = [340,885,350,884,360,872,370,870,380,870,390,868,400,868,410,868,420,868,430,870,440,870,450,872,460,875,470,875,480,880,490,880,500,880,510,878,520,878,530,875,540,872,550,870,560,868,570,868,580,872,590,882,600,885,610,888,620,888,630,858,640,855,650,852,660,833,670,833,680,835,690,838,700,845,710,848,720,855,730,862,740,860,750,866,760,878,770,880,780,882,790,885,800,885,810,885,820,888,830,888,840,888,850,888,860,888,870,885,880,885,890,885,900,882,910,880,920,875,930,870,950,870,960,870,970,872,980,875,990,875,1000,875,1010,875,1020,872,1030,872,1040,868,1050,865,1060,862,1070,862,1080,860,1090,858,1100,855,1110,850,1120,830,1130,825,1140,815,1150,805,1160,800,1170,810,1180,815,1190,830,1200,838,1210,848,1220,862,1230,865,1240,860,1250,855,1260,855,1270,858,1280,862,1290,865,1300,866,1310,868,1320,870,1330,872,1340,874,1350,875,1360,875,1370,872,1380,870,1390,872,1400,875,1410,878,1420,880,1430,880,1440,880,1450,890,1460,895,1470,895,1480,880,1490,870,1500,865,1510,862,1520,855,1530,860,1540,865];
  var h10 = [17,458,35,476,53,486,71,489,90,491,108,491,125,491,143,493,162,495,180,485,198,475,216,473,234,468,252,460,270,456,290,452,307,448,325,445,344,443,362,442,380,441,397,437,416,432,434,425,453,420,469,427,488,432,506,432,524,443,542,445,560,455,578,468,597,472,616,471,634,471,651,468,669,465,688,460,707,483,725,498,742,500,760,507,779,500,797,490,816,480,832,467,851,456,870,449,887,445,905,442,923,439,941,432,960,426,979,417,997,417,1013,417,1033,420,1051,422,1069,422,1087,422,1105,422,1123,422,1141,422,1160,429,1178,432,1196,441,1215,444,1232,445,1250,444,1268,445,1287,442,1305,437,1323,434,1342,432,1360,429,1378,429,1396,429,1414,429,1432,432,1451,435,1468,432,1487,437,1505,448,1524,461,1542,465,1560,468];
  var h6 = [13,745,26,762,38,765,51,768,63,768,76,770,89,780,102,780,114,782,127,745,139,635,152,495,165,372,176,327,188,372,201,425,214,495,227,567,239,653,252,730,265,780,277,782,290,800,303,812,315,836,328,850,340,850,353,852,365,855,378,850,391,842,403,830,416,825,428,820,441,818,454,815,467,815,479,805,492,802,504,798,517,795,529,775,541,755,552,737,564,708,578,690,590,660,603,640,615,642,628,658,640,678,653,690,665,700,678,720,690,742,703,760,716,765,729,768,741,772,754,775,767,782,779,784,791,786,804,782,816,765,828,750,841,735,853,712,866,726,878,738,891,724,904,714,916,714];
  function pairs(a) { var r = []; for (var i = 0; i < a.length; i += 2) r.push([a[i], a[i + 1]]); return r; }
  hist(z5, 865, pairs(h5), true);
  hist(z10, 445, pairs(h10), false);
  hist(z6, 745, pairs(h6), true);

  line(3, 1588, 3046, 1588, '#808080', 1, '4 3', true);

  var blue = map(z5, [[253,784],[320,795],[350,817],[375,806],[395,815],[440,815],[500,838],[565,842],[615,875],[640,830],[680,805],[730,790],[770,810],[850,858],[885,860],[900,880],[960,885],[1030,898],[1070,885],[1100,875],[1160,770],[1190,763],[1225,763],[1250,745],[1280,745],[1300,755],[1320,755],[1350,768],[1400,775],[1440,795],[1465,820],[1490,800],[1525,793],[1545,810]], 0, 1380)
    .concat(map(z10, [[0,388],[40,420],[90,447],[160,497],[230,508],[310,508],[345,503],[400,495],[450,470],[515,470],[560,483],[590,505],[650,518],[690,520],[725,578],[745,590],[765,608],[800,613],[860,605],[910,603],[980,565],[1020,553],[1060,550],[1130,520],[1190,523],[1240,522],[1340,498],[1410,484],[1460,483],[1490,480],[1520,500],[1568,515]]))
    .concat(map(z6, [[65,817],[90,840],[113,860],[135,755],[155,500],[175,255],[190,230],[205,217],[227,217],[265,292],[278,283],[300,330],[325,410],[360,475],[420,555],[460,615],[515,660],[545,640],[575,570],[605,490],[625,475],[645,475],[665,460],[680,462],[700,485],[740,500],[805,553],[835,525],[855,493],[880,522],[905,482],[917,475]]));
  var orange = map(z5, [[335,792],[400,810],[460,815],[600,845],[650,852],[700,825],[745,800],[785,800],[920,865],[1030,890],[1100,890],[1150,850],[1230,765],[1320,750],[1400,768],[1490,805],[1545,805]], 0, 1380)
    .concat(map(z10, [[0,385],[35,385],[100,408],[160,447],[230,487],[300,505],[400,505],[520,478],[580,478],[690,505],[780,550],[860,600],[890,607],[930,607],[1050,575],[1130,545],[1240,522],[1340,515],[1460,492],[1490,487],[1540,489],[1568,494]]))
    .concat(map(z6, [[80,803],[125,827],[140,815],[155,780],[175,670],[200,540],[225,400],[250,270],[277,247],[305,265],[350,350],[400,450],[465,550],[510,605],[545,633],[570,633],[600,610],[640,550],[680,490],[705,475],[740,478],[775,497],[820,527],[880,528],[900,520],[917,508]]));
  poly(blue, '#1290f5', 1.4);
  poly(orange, '#ff7200', 1.4);
  document.getElementById('macd-chart').innerHTML = out.join('');
})();
```
